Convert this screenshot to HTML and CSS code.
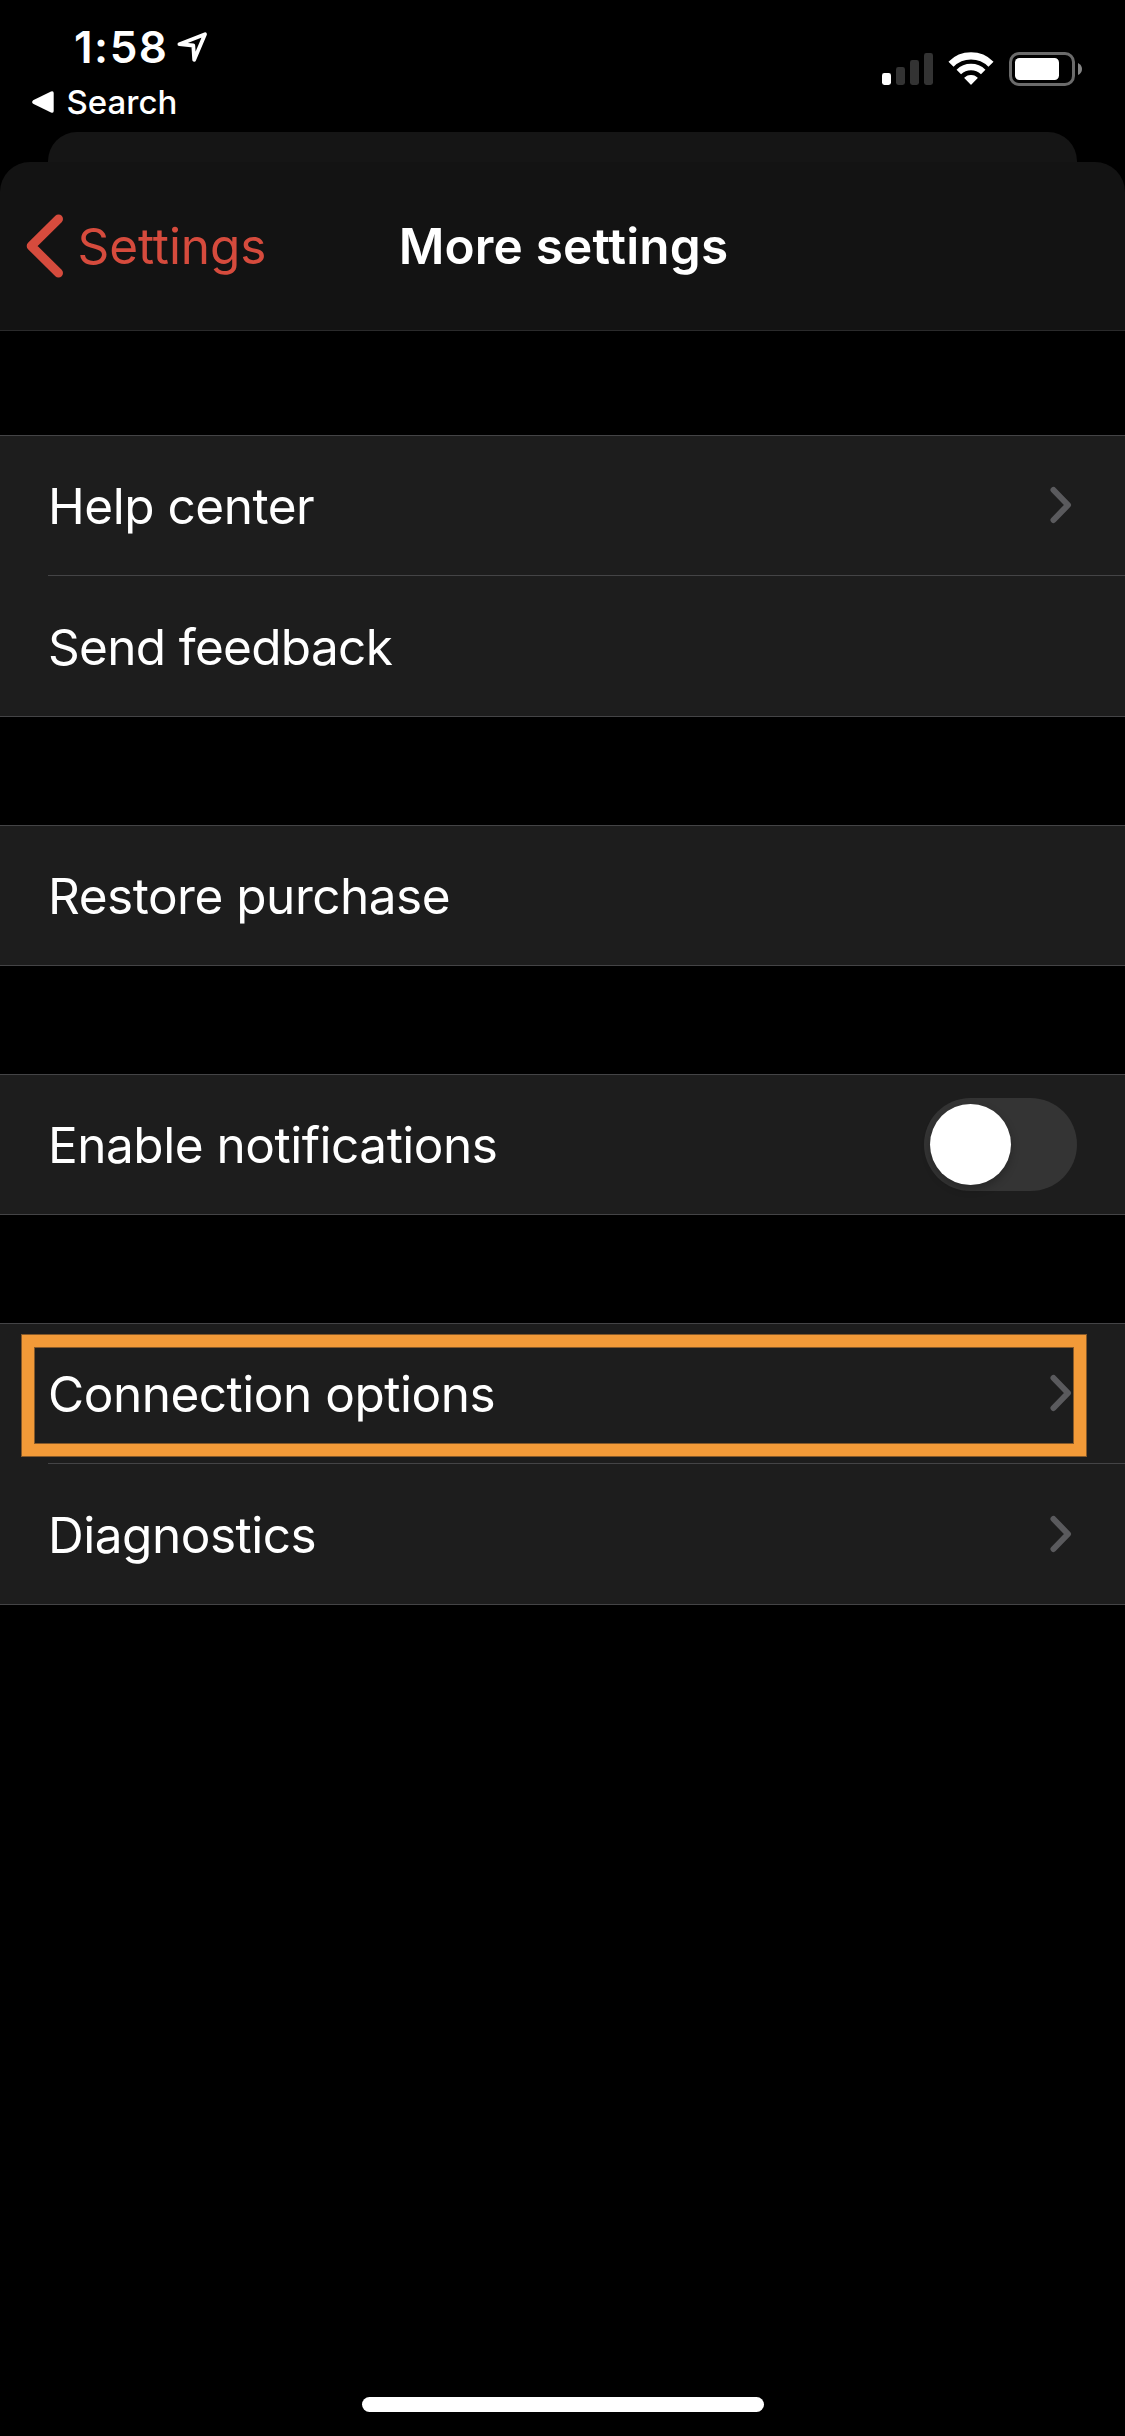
FILE: index.html
```html
<!DOCTYPE html>
<html lang="en">
<head>
<meta charset="utf-8">
<title>More settings</title>
<link rel="stylesheet" href="styles.css">
</head>
<body>
<div class="screen">
  <div class="status">
    <div class="status-left">
      <div class="clock">
        <span class="time">1:58</span>
        <svg class="location" width="34" height="34" viewBox="0 0 34 34" fill="none" stroke="#fff" stroke-width="3.8" stroke-linejoin="round"><path d="M4.4 14.2 30 4.2 19.2 29.8 18.3 15.5Z"/></svg>
      </div>
      <div class="return">
        <svg width="22" height="22" viewBox="0 0 22 22"><path d="M1.1 9.2 19 .4Q21.7-.5 21.7 2V20Q21.7 22.4 19 21.4L1.1 12.8Q-.9 11 1.1 9.2Z" fill="#fff"/></svg>
        <span class="return-label">Search</span>
      </div>
    </div>
    <div class="status-right">
      <svg class="signal" width="51" height="32" viewBox="0 0 51 32" fill="#333"><rect y="20" width="9" height="12" rx="2.4" fill="#fff"/><rect x="14" y="14" width="9" height="18" rx="2.4"/><rect x="28" y="7" width="9" height="25" rx="2.4"/><rect x="42" width="9" height="32" rx="2.4"/></svg>
      <svg class="wifi" width="46" height="34" viewBox="0 0 46 34" fill="none" stroke="#fff"><path d="M3 12.2A28.3 28.3 0 0 1 43 12.2" stroke-width="7.2"/><path d="M10.8 20A17.3 17.3 0 0 1 35.2 20" stroke-width="6.4"/><path d="M16.9 25.9A9.2 9.2 0 0 1 29.1 25.9L23 32Z" fill="#fff" stroke-width="1.2" stroke-linejoin="round"/></svg>
      <svg class="battery" width="74" height="34" viewBox="0 0 74 34"><rect x="1.5" y="1.5" width="63" height="31" rx="8.5" fill="none" stroke="#6b6b6b" stroke-width="3"/><rect x="6" y="6" width="44" height="22" rx="4.5" fill="#fff"/><path d="M69 11Q73 13 73 17T69 23Z" fill="#858585"/></svg>
    </div>
  </div>
  <div class="sheet-behind"></div>
  <div class="sheet">
    <header class="nav">
      <div class="back">
        <svg width="38" height="66" viewBox="0 0 38 66" fill="none" stroke="#d64b3d" stroke-width="9" stroke-linecap="round" stroke-linejoin="round"><path d="M32.5 6 5.2 33 32.5 60"/></svg>
        <span class="back-label">Settings</span>
      </div>
      <h1 class="title">More settings</h1>
    </header>
    <main class="groups">
      <section class="group">
        <div class="row"><span>Help center</span><svg class="chevron" width="22" height="38" viewBox="0 0 22 38"><path d="M3.5 4 18 19 3.5 34"/></svg></div>
        <div class="row row-next"><span class="feedback">Send feedback</span></div>
      </section>
      <section class="group">
        <div class="row"><span>Restore purchase</span></div>
      </section>
      <section class="group">
        <div class="row"><span>Enable notifications</span><span class="toggle"><span class="knob"></span></span></div>
      </section>
      <section class="group">
        <div class="row"><span>Connection options</span><svg class="chevron" width="22" height="38" viewBox="0 0 22 38"><path d="M3.5 4 18 19 3.5 34"/></svg><div class="highlight"></div></div>
        <div class="row row-next"><span>Diagnostics</span><svg class="chevron" width="22" height="38" viewBox="0 0 22 38"><path d="M3.5 4 18 19 3.5 34"/></svg></div>
      </section>
    </main>
  </div>
  <div class="home-indicator"></div>
</div>
</body>
</html>
```
FILE: styles.css
```css
* { box-sizing: border-box; }
body {
  margin: 0;
  background: #000;
  color: #fff;
  font-family: Inter, "Liberation Sans", sans-serif;
}
svg { display: block; flex: none; }
.screen {
  display: flex;
  flex-direction: column;
  width: 1125px;
  height: 2436px;
  overflow: hidden;
  background: #000;
}

/* Status bar */
.status {
  display: flex;
  justify-content: space-between;
  height: 132px;
  padding: 20px 43px 0 32px;
}
.clock {
  display: flex;
  align-items: center;
  height: 54px;
  padding-left: 42px;
}
.time {
  width: 100.5px;
  font-size: 44px;
  font-weight: 600;
  line-height: 54px;
  letter-spacing: 1.5px;
}
.return {
  display: flex;
  align-items: center;
  gap: 12.5px;
  height: 40px;
  margin-top: 8px;
}
.return-label {
  font-size: 33px;
  font-weight: 500;
  line-height: 40px;
}
.status-right {
  display: flex;
  align-items: flex-start;
  padding-top: 32px;
}
.signal { margin: 1px 15px 0 0; }
.wifi { margin-right: 15px; }
.battery { margin-right: -1px; }

/* Sheets */
.sheet-behind {
  height: 30px;
  margin: 0 48px;
  border-radius: 29px 29px 0 0;
  background: #151515;
}
.sheet { flex: 1; }
.nav {
  display: grid;
  grid-template-columns: 1fr auto 1fr;
  align-items: center;
  height: 169px;
  border-bottom: 1px solid #2a2a2b;
  border-radius: 30px 30px 0 0;
  background: #131313;
}
.back {
  display: flex;
  align-items: center;
  gap: 13.5px;
  padding-left: 26px;
  color: #d64b3d;
}
.back-label {
  font-size: 49.5px;
  line-height: 60px;
  letter-spacing: -0.1px;
}
.title {
  margin: 0 0 0 2px;
  font-size: 49.5px;
  font-weight: 600;
  line-height: 60px;
  letter-spacing: 0.18px;
}

/* Grouped list */
.groups {
  display: flex;
  flex-direction: column;
  gap: 108px;
  padding-top: 104px;
}
.group {
  border: solid #444446;
  border-width: 1px 0;
  background: #1d1d1d;
}
.row {
  position: relative;
  display: flex;
  align-items: center;
  justify-content: space-between;
  height: 139px;
  padding: 0 48px;
  font-size: 49.5px;
  line-height: 60px;
  letter-spacing: -0.48px;
}
.row-next {
  height: 141px;
  margin-left: 48px;
  padding-top: 2px;
  padding-left: 0;
  border-top: 1px solid #444446;
}
.feedback { letter-spacing: -0.68px; }
.chevron {
  margin: 0 5px 1px 0;
  fill: none;
  stroke: #5a5a5d;
  stroke-width: 6;
  stroke-linecap: round;
  stroke-linejoin: round;
}
.row-next .chevron { margin-bottom: 2px; }
.toggle {
  width: 153px;
  height: 93px;
  padding: 6px;
  border-radius: 46.5px;
  background: #343434;
}
.knob {
  display: block;
  width: 81px;
  height: 81px;
  border-radius: 50%;
  background: #fff;
  box-shadow: 0 4px 8px rgba(0, 0, 0, 0.25);
}
.highlight {
  position: absolute;
  top: 11px;
  left: 22px;
  width: 1064px;
  height: 121px;
  border: 12px solid #f29a38;
  box-shadow: 0 0 0 1px #85592a, inset 0 0 0 1px #85592a;
}

.home-indicator {
  flex: none;
  align-self: center;
  width: 402px;
  height: 15px;
  margin: 0 0 24px 1px;
  border-radius: 8px;
  background: #fff;
}
```
